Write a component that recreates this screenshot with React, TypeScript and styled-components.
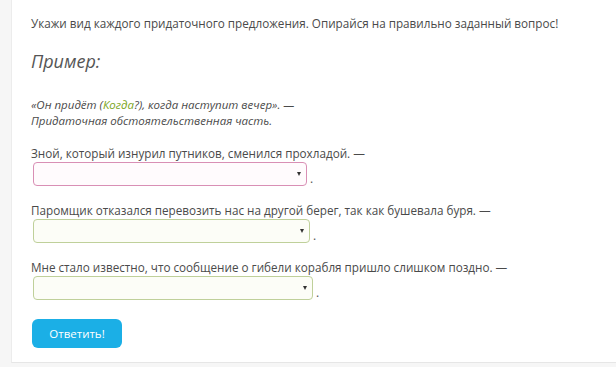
import styled, { createGlobalStyle } from 'styled-components'

const GlobalStyle = createGlobalStyle`
  html, body {
    margin: 0;
    padding: 0;
    background: #f6f6f6;
  }
  body {
    font-family: "Open Sans", "Noto Sans", sans-serif;
    color: #4a4a4a;
  }
`

const questions = [
  { text: 'Зной, который изнурил путников, сменился прохладой. —', width: 274, tone: 'pink' as const },
  { text: 'Паромщик отказался перевозить нас на другой берег, так как бушевала буря. —', width: 277, tone: 'green' as const },
  { text: 'Мне стало известно, что сообщение о гибели корабля пришло слишком поздно. —', width: 280, tone: 'green' as const },
]

const App = () => {
  return (
    <>
      <GlobalStyle />
      <S_Page>
        <S_Card>
          <S_Task>Укажи вид каждого придаточного предложения. Опирайся на правильно заданный вопрос!</S_Task>
          <S_H2>Пример:</S_H2>
          <S_Example>
            «Он придёт (<S_Hint>Когда</S_Hint>?), когда наступит вечер». —<br />
            Придаточная обстоятельственная часть.
          </S_Example>
          {questions.map((q) => (
            <S_Question key={q.text}>
              <S_QText>{q.text}</S_QText>
              <S_Answer>
                <S_Select $tone={q.tone} style={{ width: q.width }}>
                  <S_Arrow />
                </S_Select>
                <S_Dot>.</S_Dot>
              </S_Answer>
            </S_Question>
          ))}
          <S_Button>Ответить!</S_Button>
        </S_Card>
      </S_Page>
    </>
  )
}

export default App

const S_Page = styled.div`
  width: 616px;
  height: 367px;
  padding-left: 11px;
  box-sizing: border-box;
`

const S_Card = styled.div`
  background: #fff;
  height: 363px;
  box-sizing: border-box;
  border-left: 1px solid #ececec;
  border-bottom: 1px solid #e6e6e6;
  padding: 14px 0 0 19px;
`

const S_Task = styled.p`
  margin: 0;
  font-size: 11.7px;
  line-height: 18px;
  color: #4a4a4a;
`

const S_H2 = styled.h2`
  margin: 16px 0 0;
  font-size: 18px;
  line-height: 26px;
  font-style: italic;
  font-weight: 400;
  color: #555;
`

const S_Example = styled.p`
  margin: 23px 0 0;
  font-size: 11.5px;
  line-height: 16px;
  font-style: italic;
  color: #4a4a4a;
`

const S_Hint = styled.span`
  color: #7aa520;
`

const S_Question = styled.div`
  margin-top: 15px;
  & + & {
    margin-top: 15px;
  }
`

const S_QText = styled.div`
  font-size: 11.7px;
  line-height: 18px;
`

const S_Answer = styled.div`
  display: flex;
  align-items: flex-end;
  padding-left: 2px;
`

const S_Select = styled.div<{ $tone: 'pink' | 'green' }>`
  height: 24px;
  box-sizing: border-box;
  border-radius: 4px;
  border: 1px solid ${(p) => (p.$tone === 'pink' ? '#d98fb5' : '#bfd09a')};
  background: ${(p) => (p.$tone === 'pink' ? '#fffbfd' : '#fcfdf7')};
  display: flex;
  justify-content: flex-end;
  align-items: center;
  padding-right: 5px;
`

const S_Arrow = styled.span`
  width: 0;
  height: 0;
  border-left: 2.5px solid transparent;
  border-right: 2.5px solid transparent;
  border-top: 4px solid #333;
`

const S_Dot = styled.span`
  font-size: 12px;
  line-height: 14px;
  margin-left: 3px;
  color: #555;
`

const S_Button = styled.button`
  margin-top: 19px;
  width: 90px;
  height: 29px;
  border: none;
  border-radius: 6px;
  background: #1bafe6;
  color: #fff;
  font-family: "Open Sans", sans-serif;
  font-size: 11.5px;
  padding: 0;
  margin-left: 1px;
`
